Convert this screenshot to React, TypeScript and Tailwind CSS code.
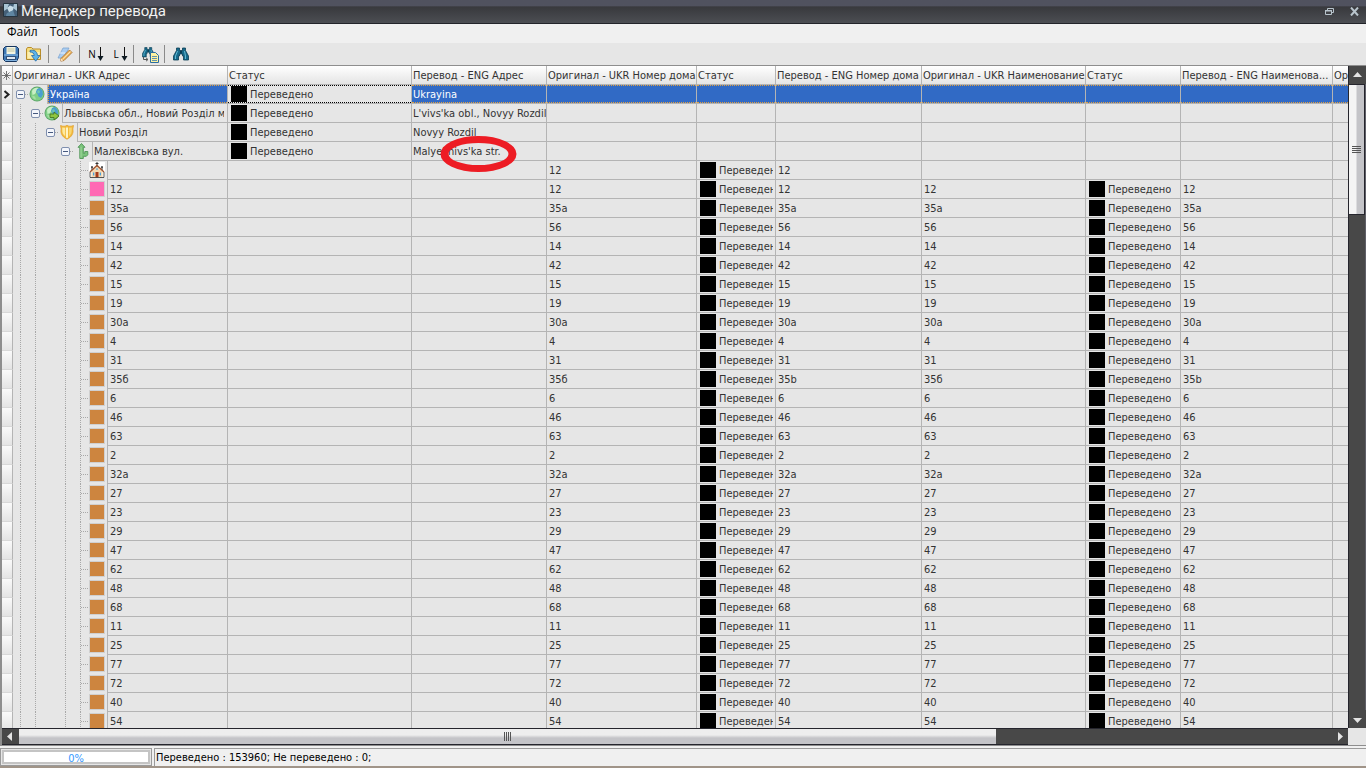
import React from 'react';

interface Place {
  name: string;
  status: string;
  translation: string;
  icon: 'globe' | 'region' | 'shield' | 'street';
}

interface House {
  number: string;
  numberEng: string;
  kind: 'church' | 'pink' | 'brown';
}

const TRANSLATED = 'Переведено';

const places: Place[] = [
  { name: 'Україна', status: TRANSLATED, translation: 'Ukrayina', icon: 'globe' },
  { name: 'Львівська обл., Новий Розділ м.', status: TRANSLATED, translation: "L'vivs'ka obl., Novyy Rozdil", icon: 'region' },
  { name: 'Новий Розділ', status: TRANSLATED, translation: 'Novyy Rozdil', icon: 'shield' },
  { name: 'Малехівська вул.', status: TRANSLATED, translation: "Malyekhivs'ka str.", icon: 'street' },
];

const brown = (number: string, numberEng = number): House => ({ number, numberEng, kind: 'brown' });

const houses: House[] = [
  { number: '12', numberEng: '12', kind: 'church' },
  { number: '12', numberEng: '12', kind: 'pink' },
  brown('35а', '35a'),
  brown('56'),
  brown('14'),
  brown('42'),
  brown('15'),
  brown('19'),
  brown('30а', '30a'),
  brown('4'),
  brown('31'),
  brown('35б', '35b'),
  brown('6'),
  brown('46'),
  brown('63'),
  brown('2'),
  brown('32а', '32a'),
  brown('27'),
  brown('23'),
  brown('29'),
  brown('47'),
  brown('62'),
  brown('48'),
  brown('68'),
  brown('11'),
  brown('25'),
  brown('77'),
  brown('72'),
  brown('40'),
  brown('54'),
];

const columns = [
  { title: 'Оригинал - UKR Адрес', width: 'w-[215px]' },
  { title: 'Статус', width: 'w-[184px]' },
  { title: 'Перевод - ENG Адрес', width: 'w-[135px]' },
  { title: 'Оригинал - UKR Номер дома', width: 'w-[150px]' },
  { title: 'Статус', width: 'w-[79px]' },
  { title: 'Перевод - ENG Номер дома', width: 'w-[146px]' },
  { title: 'Оригинал - UKR Наименование', width: 'w-[164px]' },
  { title: 'Статус', width: 'w-[95px]' },
  { title: 'Перевод - ENG Наименова...', width: 'w-[152px]' },
  { title: 'Оригинал', width: 'w-[150px]' },
];

/* ---------- icons ---------- */

const Globe = ({ arrow = false }: { arrow?: boolean }) => (
  <svg className="h-4 w-4" viewBox="0 0 16 16">
    <circle cx="8" cy="8" r="7.5" fill="#5fa56a" />
    <circle cx="8" cy="8" r="6.6" fill="#7fcf86" />
    <path d="M3 5c1.500-2.800 4-3.500 6-3 1 1 0 2-1 2.500L6 8 3.500 9z" fill="#c9efc4" />
    <path d="M8 3l3-1 2.500 2.500.5 4-2 3.500-2.500-1.500L8.500 8 7 6z" fill="#4a9fd0" />
    <path d="M9 4l2 1-.5 2L9 7.500 8 6z" fill="#6ec7b0" />
    <path d="M3 9.500l3 1 1 3c-2 0-3.500-1.500-4-4z" fill="#a4dfa0" />
    {arrow && <path d="M6 9h4V7l5 4-5 4v-2.500H6z" fill="#8fc63f" stroke="#3f6f1c" strokeWidth=".8" />}
  </svg>
);

const Shield = () => (
  <svg className="h-4 w-4" viewBox="0 0 16 16">
    <path d="M8 1.200C9.500 2.500 12 2.600 14.500 1.500L13.800 5c1 4-.8 7.800-5.800 10.200C3 12.800 1.200 9 2.200 5L1.500 1.500C4 2.600 6.500 2.500 8 1.200z" fill="#f3bb3c" stroke="#e2a336" strokeWidth=".8" />
    <path d="M3.200 3.500l3 .3v8.400C3.800 10.500 3.200 8.500 3.300 6z" fill="#fde9a0" />
    <path d="M7 3.500h2v10l-1 .7-1-.7z" fill="#fff3c4" />
    <path d="M10 3.800l2.800-.3-.1 2.500c.1 2.500-.7 4.500-2.700 6.200z" fill="#f9d672" />
  </svg>
);

const Street = () => (
  <svg className="h-4 w-4" viewBox="0 0 16 16">
    <path d="M7.500.5L11 4.300H9.300v6h1.500V8.500h3v3.300l-1.500 1.500h-3v2.200H5.800V4.300H4z" fill="#7cc47c" stroke="#4f9457" strokeWidth=".9" />
    <path d="M7 4v10.500" stroke="#a7dba2" strokeWidth=".9" />
  </svg>
);

const Church = () => (
  <svg className="h-4 w-4" viewBox="0 0 16 16">
    <path d="M0 0h16v16H0z" fill="#fff" />
    <path d="M8 0v5M6.500 1.500h3M3 4v4M2 5.200h2M13 4v4M12 5.200h2" stroke="#333" />
    <path d="M2.500 9L8 4.500 13.500 9v6.500h-11z" fill="#f4d9b2" />
    <path d="M1 10l7-6.500L15 10" fill="none" stroke="#a0522d" strokeWidth="1.300" />
    <path d="M6.500 10h3v5.500h-3z" fill="#a63c1b" />
    <path d="M4 10.500h1.300v3H4zM10.700 10.500H12v3h-1.300z" fill="#4aa0dc" />
    <path d="M1 10v5.500h14V10" fill="none" stroke="#444" strokeWidth=".9" />
    <path d="M7.400 6.200h1.200v1.800H7.400z" fill="#4aa0dc" />
  </svg>
);

const Disks = () => (
  <svg className="h-4 w-4" viewBox="0 0 16 16">
    <path d="M2.500.5h11l2 2v9l-2 4h-11l-2-2v-11z" fill="#3f78b5" stroke="#17365f" />
    <path d="M3.500 1h9v7h-9z" fill="#f4f6e4" />
    <path d="M4.500 3h7M4.500 5h7" stroke="#b9b98a" strokeWidth=".8" />
    <path d="M1 9h14" stroke="#8fc0ea" />
    <path d="M3.500 10.500h9v3h-9z" fill="#dfe8f2" stroke="#17365f" strokeWidth=".8" />
    <path d="M2 14.500h12" stroke="#8fc0ea" strokeWidth=".8" />
  </svg>
);

const ImportFolder = () => (
  <svg className="h-4 w-4" viewBox="0 0 16 16">
    <path d="M.5 3l1-1.500h4L7 3h7.500v10.500H.5z" fill="#f6dc7a" stroke="#b98d2a" />
    <path d="M1.500 6h12v6.500h-12z" fill="#fbeeb0" />
    <path d="M4 4.500c4-1 7 .5 7.500 5H14l-4.300 5.700L5.500 9.500h2.700C8 7.500 6.800 6 4 6z" fill="#5db4ea" stroke="#256aa6" strokeWidth=".8" />
  </svg>
);

const Eraser = () => (
  <svg className="h-4 w-4" viewBox="0 0 16 16">
    <path d="M6 2h6L6.500 12H1z" fill="#a9cdf2" stroke="#7fa4cf" strokeWidth=".8" />
    <path d="M3 7h5" stroke="#e9f3fd" />
    <path d="M4 12.500L12.500 4 15 6.500 7 14.500l-3.200.6z" fill="#f2ba62" stroke="#a8702b" strokeWidth=".9" />
    <path d="M6 12.800l7.500-7.300" stroke="#fde3b0" />
    <path d="M4 12.500l-.2 2.600 2.700-.5z" fill="#fbe7cd" />
  </svg>
);

const BinocularShape = () => (
  <>
    <path d="M3.500 2h3v2.500h3V2h3v2.500l3 5.500v4h-5v-4h-1V8h-3v2h-1v4h-5v-4l3-5.500z" fill="#176a8b" stroke="#0b3d54" strokeWidth=".8" />
    <path d="M4.500 5L2.500 10v3M11.500 5l1 5v3" fill="none" stroke="#63b9d4" />
    <path d="M7 5h2v2.500H7z" fill="#0b3d54" />
  </>
);

const Binoculars = () => (
  <svg className="h-4 w-4" viewBox="0 0 16 16">
    <BinocularShape />
  </svg>
);

const FindReplace = () => (
  <svg className="h-[17px] w-[17px]" viewBox="0 0 17 17">
    <g transform="scale(.78)">
      <BinocularShape />
    </g>
    <path d="M1.500 11v2.500h4M4 11.800l2 1.700-2 1.700" fill="none" stroke="#555" />
    <path d="M8.500 6.500h5l3 3v7h-8z" fill="#fdf2a0" stroke="#2a6ea0" />
    <path d="M10 10.500h5M10 12.500h5M10 14.500h5" stroke="#3a7ab0" strokeWidth=".8" />
  </svg>
);

const DownArrow = () => (
  <svg className="h-4 w-[7px]" viewBox="0 0 7 16">
    <path d="M3.500 1v11" stroke="#111" />
    <path d="M.5 10h6l-3 5z" fill="#0d1a22" />
  </svg>
);

const AppIcon = () => (
  <svg className="h-[15px] w-[15px]" viewBox="0 0 15 15">
    <path d="M.5.5h14v13H.5z" fill="#456078" stroke="#26343f" />
    <path d="M1 1h5l-2 5-3 2zM14 1v7l-4-3 1-4z" fill="#a9c4d4" />
    <path d="M4 5l3-2.500L10.500 4 10 8 6 9z" fill="#c8dde8" />
    <path d="M3 13c0-3 2-4 4-4l3-2 2 6z" fill="#5f86a2" />
  </svg>
);

const placeIcons: Record<Place['icon'], React.ReactNode> = {
  globe: <Globe />,
  region: <Globe arrow />,
  shield: <Shield />,
  street: <Street />,
};

const houseIcons: Record<House['kind'], React.ReactNode> = {
  church: <Church />,
  pink: <span className="block h-4 w-4 border border-[#d0d0d0] bg-[#ff69b4]" />,
  brown: <span className="block h-4 w-4 border border-[#d0d0d0] bg-[#cd853f]" />,
};

/* ---------- grid parts ---------- */

// Guide lines run through levels 0, 1 and 3; level 2 has no further siblings
const Guide = ({ visible }: { visible: boolean }) => (
  <span className="flex h-full w-[15px] shrink-0 pl-[7px]">
    {visible && <span className="h-full border-l border-dotted border-[#a8a8a8]" />}
  </span>
);

const Expander = ({ name }: { name: string }) => (
  <button aria-label={`Свернуть ${name}`} className="flex h-full w-[15px] shrink-0 items-center pl-[3px]">
    <span className="flex h-[9px] w-[9px] items-center justify-center rounded-[2px] border border-[#7f8fae] bg-[#f4f6fb]">
      <span className="h-px w-[5px] bg-[#46597f]" />
    </span>
    <span className="flex-1 border-t border-dotted border-[#a8a8a8]" />
  </button>
);

const Cell = ({ children, selected }: { children?: React.ReactNode; selected?: boolean }) => (
  <td className="h-[19px] overflow-hidden border-r border-b border-[#b4b4b4] p-0">
    <div
      className={
        selected
          ? 'h-[18px] overflow-hidden border-y border-dotted border-[#e0a040] bg-[#316ac5] pt-px pl-px leading-4 text-white'
          : 'h-[18px] overflow-hidden pt-[2px] pl-px leading-4'
      }
    >
      {children}
    </div>
  </td>
);

const NumberCell = ({ children }: { children?: React.ReactNode }) => (
  <td className="h-[19px] overflow-hidden border-r border-b border-[#b4b4b4] p-0">
    <div className="h-[18px] overflow-hidden px-[2px] pt-[2px] leading-4">{children}</div>
  </td>
);

const StatusCell = ({ status, focused }: { status: string; focused?: boolean }) => (
  <td className="h-[19px] overflow-hidden border-r border-b border-[#b4b4b4] p-0">
    <div
      className={
        focused
          ? 'flex h-[18px] items-center gap-[3px] border-y border-dotted border-black px-[3px]'
          : 'flex h-[18px] items-center gap-[3px] pr-[2px] pl-[3px]'
      }
    >
      <span className="h-4 w-4 shrink-0 bg-black" />
      <span className="overflow-hidden pt-[2px] leading-4">{status}</span>
    </div>
  </td>
);

const Indicator = ({ current }: { current?: boolean }) => (
  <td className="h-[19px] border-r border-b border-r-[#b4b4b4] border-b-[#d8d8d8] bg-linear-to-b from-[#fafafa] to-[#e4e4e4] p-0">
    {current && (
      <svg className="mx-auto h-[9px] w-[8px]" viewBox="0 0 8 9">
        <path d="M1.500 1l4 3.500-4 3.500" fill="none" stroke="#222" strokeWidth="2" />
      </svg>
    )}
  </td>
);

const PlaceRow = ({ place, level }: { place: Place; level: number }) => {
  const selected = level === 0;
  return (
    <tr>
      <Indicator current={selected} />
      <td className="h-[19px] overflow-hidden border-r border-[#b4b4b4] p-0">
        <div className="flex h-[19px]">
          {Array.from({ length: level }, (_, i) => (
            <Guide key={i} visible={i !== 2} />
          ))}
          <Expander name={place.name} />
          <span className="w-[19px] shrink-0 pt-px pl-px">{placeIcons[place.icon]}</span>
          <div className="min-w-0 flex-1 border-b border-l border-[#b4b4b4]">
            <div
              className={
                selected
                  ? 'h-[18px] overflow-hidden border border-r-0 border-dotted border-[#e0a040] bg-[#316ac5] pt-px pl-px leading-4 text-white'
                  : 'mr-[3px] h-[18px] overflow-hidden pt-[2px] pl-px leading-4'
              }
            >
              {place.name}
            </div>
          </div>
        </div>
      </td>
      <StatusCell status={place.status} focused={selected} />
      <Cell selected={selected}>{place.translation}</Cell>
      <Cell selected={selected} />
      <Cell selected={selected} />
      <Cell selected={selected} />
      <Cell selected={selected} />
      <Cell selected={selected} />
      <Cell selected={selected} />
      <Cell selected={selected} />
    </tr>
  );
};

const HouseRow = ({ house }: { house: House }) => {
  const named = house.kind !== 'church';
  return (
    <tr>
      <Indicator />
      <td className="h-[19px] overflow-hidden border-r border-[#b4b4b4] p-0">
        <div className="flex h-[19px]">
          <Guide visible />
          <Guide visible />
          <Guide visible={false} />
          <Guide visible />
          <span className="flex h-full w-[15px] shrink-0 items-center pl-[7px]">
            <span className="h-full border-l border-dotted border-[#a8a8a8]" />
            <span className="flex-1 border-t border-dotted border-[#a8a8a8]" />
          </span>
          <span className="w-[19px] shrink-0 pt-px pl-px">{houseIcons[house.kind]}</span>
          <div className="h-[19px] flex-1 border-b border-l border-[#b4b4b4] pt-[2px] pl-[2px] leading-4">
            {named && house.number}
          </div>
        </div>
      </td>
      <NumberCell />
      <NumberCell />
      <NumberCell>{house.number}</NumberCell>
      <StatusCell status={TRANSLATED} />
      <NumberCell>{house.numberEng}</NumberCell>
      <NumberCell>{named && house.number}</NumberCell>
      {named ? <StatusCell status={TRANSLATED} /> : <NumberCell />}
      <NumberCell>{named && house.numberEng}</NumberCell>
      <NumberCell />
    </tr>
  );
};

const ToolButton = ({ label, children }: { label: string; children: React.ReactNode }) => (
  <button aria-label={label} className="flex h-[22px] w-[22px] items-center justify-center">
    {children}
  </button>
);

const LetterButton = ({ letter }: { letter: string }) => (
  <button
    aria-label={`Следующий ${letter}`}
    className="flex h-[22px] w-[21px] items-center gap-px pl-[3px] font-['Open_Sans',sans-serif] text-[10px] text-black"
  >
    <span className="w-2">{letter}</span>
    <DownArrow />
  </button>
);

const Separator = () => <span className="mr-[5px] ml-[3px] h-[18px] w-px bg-[#8a8a8a]" />;

const ScrollButton = ({ label, path }: { label: string; path: string }) => (
  <button aria-label={label} className="flex h-[18px] w-[17px] shrink-0 items-center justify-center">
    <svg className="h-[9px] w-[9px]" viewBox="0 0 9 9">
      <path d={path} fill="#e4e4e4" />
    </svg>
  </button>
);

const VerticalScroll = () => (
  <div className="flex w-[18px] shrink-0 flex-col items-center border-l border-[#25252d] bg-[#484848]">
    <ScrollButton label="Вверх" path="M0 6l4.500-5L9 6z" />
    <div className="w-full flex-1 border-r border-[#606068]">
      <div className="flex h-[21%] flex-col items-center justify-center gap-px rounded-[1px] border-y border-r border-[#25252d] bg-linear-to-r from-[#f4f4f4] from-45% to-[#c4c4c8] to-55%">
        <span className="h-px w-[9px] bg-[#555]" />
        <span className="h-px w-[9px] bg-[#555]" />
        <span className="h-px w-[9px] bg-[#555]" />
        <span className="h-px w-[9px] bg-[#555]" />
      </div>
    </div>
    <ScrollButton label="Вниз" path="M0 3l4.500 5L9 3z" />
  </div>
);

const HorizontalScroll = () => (
  <div className="flex h-[17px] shrink-0 bg-[#e6e6e6] pr-[18px]">
    <div className="flex min-w-0 flex-1 items-center overflow-hidden border-y border-[#25252d] bg-[#484848]">
      <ScrollButton label="Влево" path="M6 0L1 4.500 6 9z" />
      <div className="h-full flex-1">
        <div className="flex h-full w-[74.5%] items-center justify-center gap-px bg-linear-to-b from-[#eeeeee] from-40% to-[#c4c4c8] to-60%">
          <span className="h-[9px] w-px bg-[#555]" />
          <span className="h-[9px] w-px bg-[#555]" />
          <span className="h-[9px] w-px bg-[#555]" />
          <span className="h-[9px] w-px bg-[#555]" />
        </div>
      </div>
      <ScrollButton label="Вправо" path="M3 0l5 4.500L3 9z" />
    </div>
  </div>
);

const App: React.FC = () => (
  <div className="flex h-screen flex-col overflow-hidden bg-[#e6e6e6] font-['DejaVu_Sans_Condensed','Noto_Sans',sans-serif] text-[11px] text-[#333]">
    <header className="flex h-6 shrink-0 items-center border-b border-[#22242a] bg-linear-to-b from-[#50525f] from-25% via-[#38393d] via-30% to-[#4c4e53] pb-[2px] pl-[3px]">
      <AppIcon />
      <h1 className="ml-[3px] flex-1 font-['Roboto',sans-serif] text-[15px] leading-5 text-[#f2f2f2]">Менеджер перевода</h1>
      <button aria-label="Восстановить" className="mr-4 pt-px">
        <svg className="h-[9px] w-[9px]" viewBox="0 0 9 9">
          <path d="M2.500 3V1.500h6v4H7" fill="none" stroke="#b8c4cc" />
          <path d="M.5 3.500h6v4h-6z" fill="none" stroke="#b8c4cc" />
          <path d="M0 3h7v1.500H0z" fill="#b8c4cc" />
        </svg>
      </button>
      <button aria-label="Закрыть" className="mr-[7px] pt-px">
        <svg className="h-[9px] w-[9px]" viewBox="0 0 9 9">
          <path d="M1 .5l7 8M8 .5l-7 8" stroke="#b8c4cc" strokeWidth="2" />
        </svg>
      </button>
    </header>

    <nav className="flex h-[19px] shrink-0 items-center gap-3 bg-[#f0f0f0] pb-[3px] pl-[7px] font-['Open_Sans',sans-serif] text-[12px] leading-4 text-black">
      <button>Файл</button>
      <button>Tools</button>
    </nav>

    <div className="flex h-[22px] shrink-0 items-center">
      <div className="flex gap-px">
        <ToolButton label="Сохранить"><Disks /></ToolButton>
        <ToolButton label="Импорт"><ImportFolder /></ToolButton>
      </div>
      <Separator />
      <ToolButton label="Очистить"><Eraser /></ToolButton>
      <Separator />
      <div className="flex gap-[3px]">
        <LetterButton letter="N" />
        <LetterButton letter="L" />
      </div>
      <Separator />
      <ToolButton label="Найти и заменить"><FindReplace /></ToolButton>
      <Separator />
      <ToolButton label="Найти"><Binoculars /></ToolButton>
    </div>

    <main className="flex min-h-0 flex-1 flex-col border-t border-b border-l-2 border-[#8e8e8e]">
      <div className="flex min-h-0 flex-1">
        <div className="relative min-w-0 flex-1 overflow-hidden">
          <table className="w-[1481px] table-fixed border-separate border-spacing-0 whitespace-nowrap">
            <thead>
              <tr>
                <th className="h-[19px] w-[11px] border-r border-b border-[#b4b4b4] bg-linear-to-b from-white to-[#e4e4e4] p-0">
                  <svg className="h-[9px] w-[9px]" viewBox="0 0 9 9">
                    <path d="M4.500 0v9M0 4.500h9M1.500 1.500l6 6M7.500 1.500l-6 6" stroke="#555" strokeWidth=".8" />
                  </svg>
                </th>
                {columns.map((column, idx) => (
                  <th
                    key={idx}
                    className={`${column.width} h-[19px] overflow-hidden border-r border-b border-[#b4b4b4] bg-linear-to-b from-white to-[#e4e4e4] pt-[2px] pr-0 pb-0 pl-px text-left leading-4 font-normal`}
                  >
                    {column.title}
                  </th>
                ))}
              </tr>
            </thead>
            <tbody>
              {places.map((place, level) => (
                <PlaceRow key={place.name} place={place} level={level} />
              ))}
              {houses.map((house, idx) => (
                <HouseRow key={idx} house={house} />
              ))}
            </tbody>
          </table>
          <svg className="absolute top-[70px] left-[438px] h-[36px] w-[77px]" viewBox="0 0 77 36">
            <path
              fill="#ed1c24"
              fillRule="evenodd"
              d="M38.500 0a38 18 0 1 0 0 36a38 18 0 1 0 0-36zM38.500 7a30 11 0 1 1 0 22a30 11 0 1 1 0-22z"
            />
          </svg>
        </div>
        <VerticalScroll />
      </div>
      <HorizontalScroll />
    </main>

    <footer className="flex h-[22px] shrink-0 flex-col border-b-2 border-[#a09488] bg-[#f0f0f0] pt-[2px] text-black">
      <div className="flex min-h-0 flex-1">
        <div className="flex w-[152px] border border-[#9a9a9a] bg-[#e6e6e6] p-px">
          <div
            role="progressbar"
            aria-label="Ход перевода"
            aria-valuenow={0}
            className="flex flex-1 items-center justify-center border-2 border-[#c4c4c4] bg-white pt-[3px] leading-3 text-[#3399ff]"
          >
            0%
          </div>
        </div>
        <p className="ml-[2px] flex-1 border-t border-l border-[#9a9a9a] pl-px leading-[18px]">
          Переведено : 153960; Не переведено : 0;
        </p>
      </div>
    </footer>
  </div>
);

export default App;
